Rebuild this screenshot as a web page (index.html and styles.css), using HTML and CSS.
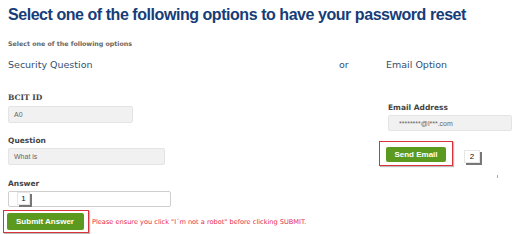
FILE: index.html
```html
<!DOCTYPE html>
<html>
<head>
<meta charset="utf-8">
<link rel="stylesheet" href="styles.css">
</head>
<body>
<div class="page">
  <h1 class="title">Select one of the following options to have your password reset</h1>
  <div class="sub">Select one of the following options</div>
  <div class="heads">
    <div class="head head-left">Security Question</div>
    <div class="head head-or">or</div>
    <div class="head">Email Option</div>
  </div>
  <div class="cols">
    <div class="col-left">
      <div class="field f-id">
        <div class="label label-serif">BCIT ID</div>
        <div class="input ro w-id">A0</div>
      </div>
      <div class="field f-q">
        <div class="label">Question</div>
        <div class="input ro w-q">What is</div>
      </div>
      <div class="field f-a">
        <div class="label">Answer</div>
        <div class="input w-a"><span class="callout c1">1</span></div>
      </div>
      <div class="submit-row">
        <div class="redbox rb-submit"><button class="btn btn-submit">Submit Answer</button></div>
        <div class="warn">Please ensure you click "I´m not a robot" before clicking SUBMIT.</div>
      </div>
    </div>
    <div class="col-right">
      <div class="field f-email">
        <div class="label">Email Address</div>
        <div class="input ro w-email">********@l***.com</div>
      </div>
      <div class="send-row">
        <div class="redbox rb-send"><button class="btn btn-send">Send Email</button></div>
        <span class="callout c2">2</span>
      </div>
      <div class="dot"></div>
    </div>
  </div>
</div>
</body>
</html>
```
FILE: styles.css
```css
* { box-sizing: border-box; }
html, body { margin: 0; padding: 0; background: #fff; }
body { width: 525px; height: 234px; overflow: hidden; }
.page { padding: 5px 0 0 8px; position: relative; }
.title {
  margin: 0;
  font-family: "Liberation Sans", Arial, sans-serif;
  font-weight: bold;
  font-size: 16px;
  letter-spacing: -0.45px;
  line-height: 20px;
  color: #163d78;
  white-space: nowrap;
}
.sub {
  margin-top: 15px;
  font-family: "DejaVu Sans", Verdana, sans-serif;
  font-weight: bold;
  font-size: 6.3px;
  line-height: 8px;
  color: #666;
}
.heads {
  display: flex;
  margin-top: 11px;
  font-family: "DejaVu Sans", Verdana, sans-serif;
  font-size: 9.5px;
  line-height: 12px;
  color: #33506f;
}
.head-left { width: 331px; }
.head-or { width: 47px; }
.cols { display: flex; }
.col-left { width: 378px; position: relative; }
.col-right { flex: 1; position: relative; }
.label {
  font-family: "DejaVu Sans", Verdana, sans-serif;
  font-weight: bold;
  font-size: 7.5px;
  line-height: 10px;
  color: #444;
}
.label-serif { font-family: "DejaVu Serif", Georgia, serif; }
.input {
  height: 17px;
  border: 1px solid #dcdcdc;
  border-radius: 2px;
  background: #fff;
  font-family: "Liberation Sans", Arial, sans-serif;
  font-size: 7px;
  line-height: 15px;
  padding-left: 5px;
  color: #666;
  position: relative;
}
.ro { background: #f1f1f1; border-color: #e4e4e4; }
.f-id { margin-top: 22px; }
.f-id .label { margin-bottom: 3px; }
.w-id { width: 125px; }
.f-q { margin-top: 13px; }
.f-q .label { margin-bottom: 2px; }
.w-q { width: 157px; }
.f-a { margin-top: 14px; }
.f-a .label { margin-bottom: 2px; }
.w-a { width: 163px; height: 16px; border-color: #cfcfcf; }
.callout {
  position: absolute;
  background: #fff;
  border: 1px solid #e6e6e6;
  box-shadow: 2px 2px 0 #777;
  font-family: "Liberation Sans", Arial, sans-serif;
  font-size: 8px;
  line-height: 11px;
  text-align: center;
  color: #111;
}
.c1 { left: 8px; top: 0px; width: 13px; height: 13px; }
.submit-row { display: flex; align-items: center; margin-top: 3px; margin-left: -5px; }
.redbox {
  border: 1.5px solid #d9343b;
  box-shadow: 1px 1px 1px #bbb;
}
.rb-submit { padding: 1.5px 4.5px 2.5px 2.5px; }
.btn {
  display: block;
  border: none;
  border-radius: 2px;
  background: #5b9a1e;
  color: #fff;
  font-family: "Liberation Sans", Arial, sans-serif;
  font-weight: bold;
  font-size: 8px;
  padding: 0;
  margin: 0;
}
.btn-submit { width: 77px; height: 17px; }
.warn {
  margin-left: 3px;
  font-family: "DejaVu Sans", Verdana, sans-serif;
  font-size: 6.6px;
  color: #e6294a;
  white-space: nowrap;
}
.f-email { margin-top: 32px; margin-left: 2px; }
.f-email .label { margin-bottom: 2px; }
.w-email { width: 124px; height: 16px; padding-left: 10px; }
.send-row { display: flex; align-items: center; margin-top: 10px; position: relative; }
.rb-send { margin-left: -7px; padding: 5px 6px 3px 6px; }
.btn-send { width: 60px; height: 15px; }
.c2 { position: static; width: 16px; height: 13px; margin-left: 11px; margin-top: 6px; }
.dot { position: absolute; left: 111px; top: 104px; width: 1px; height: 3px; background: #aaa; }
```
